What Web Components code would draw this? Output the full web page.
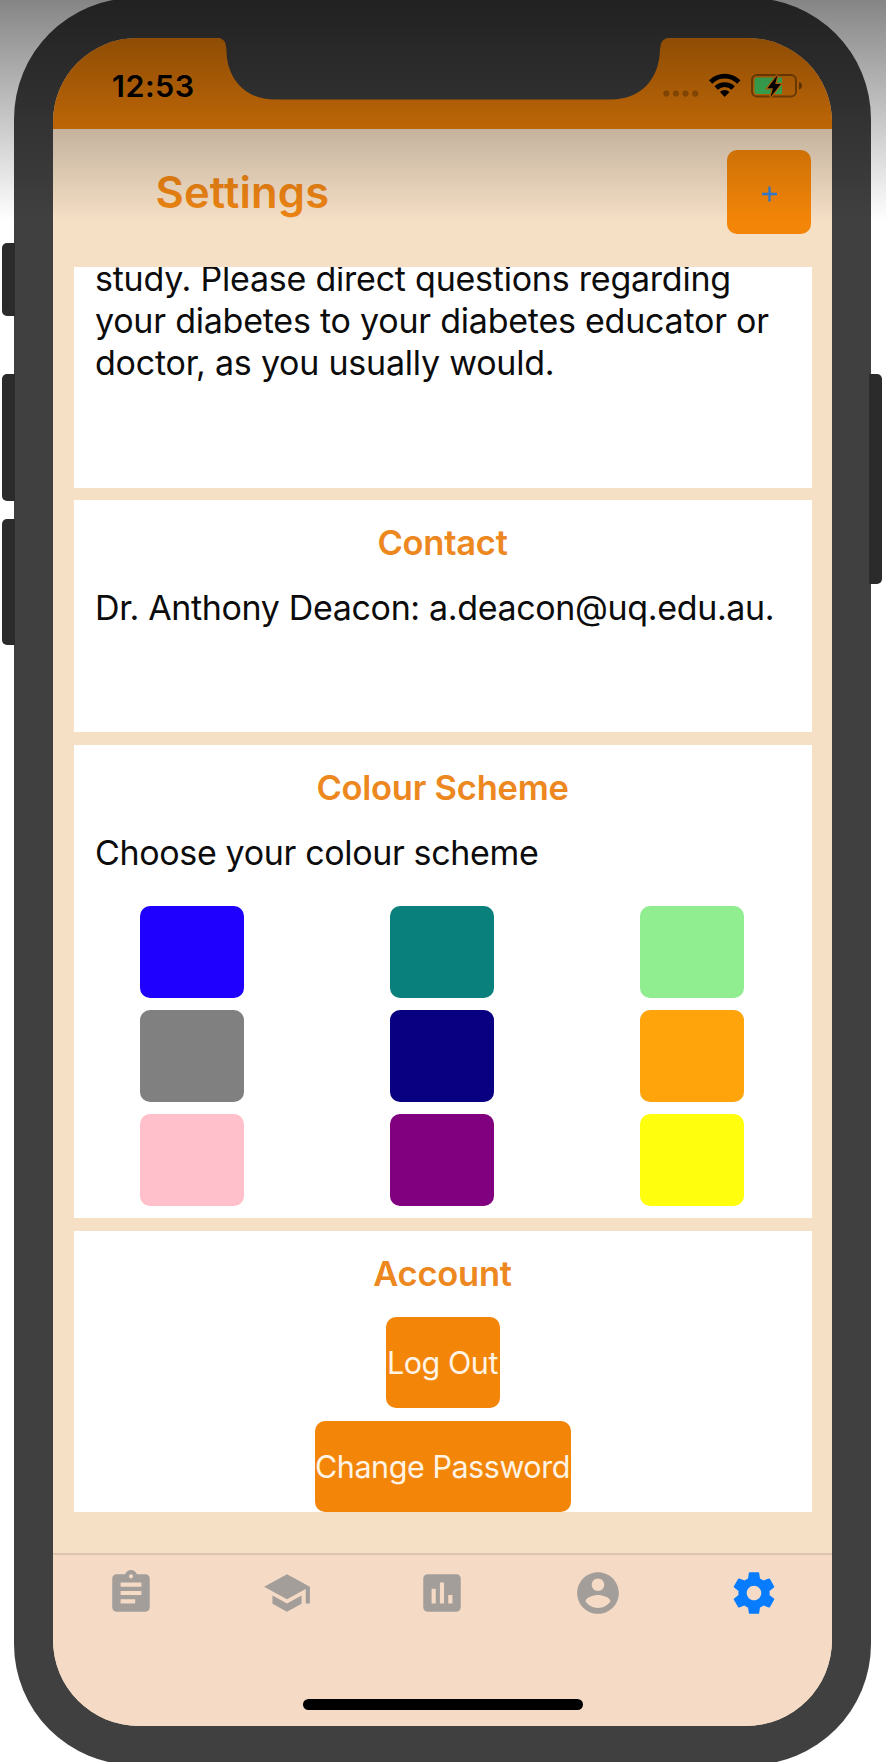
<!DOCTYPE html>
<html lang="en">
<head>
<meta charset="UTF-8">
<title>Settings</title>
<style>
    html, body {
        margin: 0;
        padding: 0;
        height: 1762px;
        overflow: hidden;
        background: #fff;
        font-family: Inter, "Liberation Sans", sans-serif;
    }
</style>
</head>
<body>
<phone-frame>
    <status-bar time="12:53"></status-bar>
    <page-header heading="Settings"></page-header>
    <settings-list>
        <settings-card class="about">
            <body-text style="--spacing: -0.23px">study. Please direct questions regarding<br>your diabetes to your diabetes educator or<br>doctor, as you usually would.</body-text>
        </settings-card>
        <settings-card class="contact" heading="Contact">
            <body-text>Dr. Anthony Deacon: a.deacon@uq.edu.au.</body-text>
        </settings-card>
        <settings-card class="colours" heading="Colour Scheme">
            <body-text>Choose your colour scheme</body-text>
            <colour-grid colours="#1f00ff #0a807d #90ee90 #808080 #080080 #ffa40a #ffc0cb #800080 #ffff0d"></colour-grid>
        </settings-card>
        <settings-card class="account" heading="Account">
            <action-button width="114">Log Out</action-button>
            <action-button width="256">Change Password</action-button>
        </settings-card>
    </settings-list>
    <tab-bar></tab-bar>
</phone-frame>

<script>
class PhoneFrame extends HTMLElement {
    constructor() {
        super();
        this.attachShadow({ mode: 'open' });
        this.shadowRoot.innerHTML = `
            <style>
                :host {
                    display: block;
                    position: relative;
                    width: 886px;
                    height: 1762px;
                    overflow: hidden;
                }

                .body {
                    position: relative;
                    box-sizing: border-box;
                    width: 857.5px;
                    height: 1767px;
                    margin: -2px 0 0 13.5px;
                    padding: 39.5px 39px 39px 39.5px;
                    border-radius: 121px;
                    background: #404040;
                }

                .screen {
                    display: flex;
                    flex-direction: column;
                    height: 1688.5px;
                    border-radius: 84px 84px 86px 86px;
                    overflow: hidden;
                    background: #f5dfc5;
                }

                .key {
                    position: absolute;
                    left: 2px;
                    width: 13px;
                    border-radius: 5px 0 0 5px;
                    background: #2b2b2b;
                }

                .key.power {
                    left: 869px;
                    border-radius: 0 5px 5px 0;
                }

                .notch {
                    position: absolute;
                    left: 0;
                    top: 0;
                }

                .shade {
                    position: absolute;
                    inset: 0 0 auto 0;
                    height: 221px;
                    background: linear-gradient(rgba(0, 0, 0, 0.48), rgba(0, 0, 0, 0));
                    pointer-events: none;
                }
            </style>

            <div class="body"><div class="screen"><slot></slot></div></div>
            <svg class="notch" width="886" height="110">
                <path fill="#404040" d="M214 36V37.5H217Q226 38 226.4 49C226.5 80 246 99.5 275 99.5H611C640 99.5 659.5 80 660 49Q660.5 38 670 37.5V36Z"/>
            </svg>
            <div class="key" style="top: 243px; height: 73px"></div>
            <div class="key" style="top: 374px; height: 127px"></div>
            <div class="key" style="top: 518.5px; height: 126.5px"></div>
            <div class="key power" style="top: 374px; height: 210px"></div>
            <div class="shade"></div>
        `;
    }
}

class StatusBar extends HTMLElement {
    constructor() {
        super();
        this.attachShadow({ mode: 'open' });
        this.shadowRoot.innerHTML = `
            <style>
                :host {
                    display: flex;
                    justify-content: space-between;
                    box-sizing: border-box;
                    height: 91.5px;
                    padding: 29px 28px 0 59px;
                    background: #ec7f08;
                }

                .time {
                    font-size: 30.5px;
                    font-weight: 600;
                    line-height: 38px;
                    letter-spacing: 0.5px;
                }

                svg {
                    display: block;
                    margin-top: 3px;
                }
            </style>

            <span class="time">${this.getAttribute('time')}</span>
            <svg width="144" height="34" viewBox="660 70 144 34">
                <g fill="#000" opacity="0.25">
                    <circle cx="666.3" cy="93.6" r="3.1"/>
                    <circle cx="675.9" cy="93.6" r="3.1"/>
                    <circle cx="685.5" cy="93.6" r="3.1"/>
                    <circle cx="695.2" cy="93.6" r="3.1"/>
                </g>
                <g fill="none" stroke="#000" stroke-width="4.8">
                    <path d="M710.6 82A20 20 0 0 1 738.8 82"/>
                    <path d="M716.2 88A12.2 12.2 0 0 1 733.2 88"/>
                </g>
                <path d="M719.9 91.9A7 7 0 0 1 729.5 91.9L724.7 96.9Z"/>
                <rect x="752" y="75" width="44" height="21.5" rx="5" fill="none" stroke="#000" stroke-opacity="0.38" stroke-width="2"/>
                <path d="M757 77.5H782V94H757Q754.5 94 754.5 91.5V80Q754.5 77.5 757 77.5Z" fill="#49d868"/>
                <path d="M799 82Q802 83 802 85.8Q802 88.6 799 89.6Z" opacity="0.45"/>
                <path d="M777.5 75L767.5 88.2H773L770.5 97L780.8 84H775.2Z" stroke="#ec7f08" stroke-width="2.6" paint-order="stroke"/>
            </svg>
        `;
    }
}

class PageHeader extends HTMLElement {
    constructor() {
        super();
        this.attachShadow({ mode: 'open' });
        this.shadowRoot.innerHTML = `
            <style>
                :host {
                    display: flex;
                    justify-content: space-between;
                    box-sizing: border-box;
                    height: 137.5px;
                    padding: 21px 21.5px 0 102.5px;
                }

                h1 {
                    margin: 0;
                    font-size: 43.5px;
                    font-weight: 600;
                    line-height: 84px;
                    letter-spacing: 0.15px;
                    font-feature-settings: "calt" 0;
                    color: #ed8413;
                }

                button {
                    width: 83.5px;
                    height: 83.5px;
                    padding: 0 0 0 1px;
                    border: 0;
                    border-radius: 10px;
                    background: #f38508;
                    display: grid;
                    place-items: center;
                }
            </style>

            <h1>${this.getAttribute('heading')}</h1>
            <button aria-label="Add">
                <svg width="17" height="20" viewBox="0 0 17 20">
                    <path d="M1 12H16M8.5 4.5V19.5" stroke="#2f7fd6" stroke-width="2.3" fill="none"/>
                </svg>
            </button>
        `;
    }
}

class SettingsList extends HTMLElement {
    constructor() {
        super();
        this.attachShadow({ mode: 'open' });
        this.shadowRoot.innerHTML = `
            <style>
                :host {
                    display: flex;
                    flex-direction: column;
                    gap: 12.5px;
                    box-sizing: border-box;
                    height: 1286px;
                    padding: 0 20.5px;
                }

                ::slotted(*) { flex: none; }
                ::slotted(.about) { height: 221px; --justify: flex-end; --pad: 0 0 104px; }
                ::slotted(.contact) { height: 232px; }
                ::slotted(.colours) { height: 473.5px; }
                ::slotted(.account) { height: 281px; --align: center; --heading-gap: 22px; }
            </style>

            <slot></slot>
        `;
    }
}

class SettingsCard extends HTMLElement {
    constructor() {
        super();
        this.attachShadow({ mode: 'open' });
        const heading = this.getAttribute('heading');
        this.shadowRoot.innerHTML = `
            <style>
                :host {
                    display: flex;
                    flex-direction: column;
                    justify-content: var(--justify, flex-start);
                    align-items: var(--align, stretch);
                    box-sizing: border-box;
                    padding: var(--pad, 22px 0 0);
                    overflow: hidden;
                    background: #fff;
                }

                h2 {
                    margin: 0 0 var(--heading-gap, 23px);
                    font-size: 34.5px;
                    font-weight: 600;
                    line-height: 42px;
                    letter-spacing: -0.25px;
                    text-align: center;
                    color: #ed8720;
                }
            </style>

            ${heading ? `<h2>${heading}</h2>` : ''}
            <slot></slot>
        `;
    }
}

class BodyText extends HTMLElement {
    constructor() {
        super();
        this.attachShadow({ mode: 'open' });
        this.shadowRoot.innerHTML = `
            <style>
                :host {
                    display: block;
                    padding-left: 21.5px;
                    font-size: 34px;
                    line-height: 42px;
                    letter-spacing: var(--spacing, -0.35px);
                    white-space: nowrap;
                    color: #0c0c0c;
                }
            </style>

            <slot></slot>
        `;
    }
}

class ColourGrid extends HTMLElement {
    constructor() {
        super();
        this.attachShadow({ mode: 'open' });
        const colours = this.getAttribute('colours').split(' ');
        this.shadowRoot.innerHTML = `
            <style>
                :host {
                    display: grid;
                    grid-template-columns: repeat(3, 104px);
                    grid-auto-rows: 91.5px;
                    justify-content: space-between;
                    row-gap: 12.5px;
                    padding: 32.5px 67.5px 0 66.5px;
                }

                div { border-radius: 10px; }
            </style>

            ${colours.map(c => `<div style="background: ${c}"></div>`).join('')}
        `;
    }
}

class ActionButton extends HTMLElement {
    constructor() {
        super();
        this.attachShadow({ mode: 'open' });
        this.shadowRoot.innerHTML = `
            <style>
                :host {
                    display: block;
                    margin-bottom: 12.5px;
                }

                button {
                    width: ${this.getAttribute('width')}px;
                    height: 91.5px;
                    padding: 0;
                    border: 0;
                    border-radius: 10px;
                    background: #f38508;
                    font-family: inherit;
                    font-size: 30.5px;
                    letter-spacing: -0.45px;
                    white-space: nowrap;
                    color: #fff3e4;
                    display: flex;
                    align-items: center;
                    justify-content: center;
                }
            </style>

            <button><slot></slot></button>
        `;
    }
}

// 24x24 tab icons
const ICONS = [
    'M19 3h-4.18C14.4 1.84 13.3 1 12 1c-1.3 0-2.4.84-2.82 2H5c-1.1 0-2 .9-2 2v14c0 1.1.9 2 2 2h14c1.1 0 2-.9 2-2V5c0-1.1-.9-2-2-2zm-7 0c.55 0 1 .45 1 1s-.45 1-1 1-1-.45-1-1 .45-1 1-1zm2 14H7v-2h7v2zm3-4H7v-2h10v2zm0-4H7V7h10v2z',
    'M5 13.18v4L12 21l7-3.82v-4L12 17l-7-3.82zM12 3L1 9l11 6 9-4.91V17h2V9L12 3z',
    'M19 3H5c-1.1 0-2 .9-2 2v14c0 1.1.9 2 2 2h14c1.1 0 2-.9 2-2V5c0-1.1-.9-2-2-2zM9 17H7v-7h2v7zm4 0h-2V7h2v10zm4 0h-2v-4h2v4z',
    'M12 2C6.48 2 2 6.48 2 12s4.48 10 10 10 10-4.48 10-10S17.52 2 12 2zm0 3c1.66 0 3 1.34 3 3s-1.34 3-3 3-3-1.34-3-3 1.34-3 3-3zm0 14.2c-2.5 0-4.71-1.28-6-3.22.03-1.99 4-3.08 6-3.08 1.99 0 5.97 1.09 6 3.08-1.29 1.94-3.5 3.22-6 3.22z',
    'M19.43 12.98c.04-.32.07-.64.07-.98s-.03-.66-.07-.98l2.11-1.65c.19-.15.24-.42.12-.64l-2-3.46c-.12-.22-.39-.3-.61-.22l-2.49 1c-.52-.4-1.08-.73-1.69-.98l-.38-2.65C14.46 2.18 14.25 2 14 2h-4c-.25 0-.46.18-.49.42l-.38 2.65c-.61.25-1.17.59-1.69.98l-2.49-1c-.23-.09-.49 0-.61.22l-2 3.46c-.13.22-.07.49.12.64l2.11 1.65c-.04.32-.07.65-.07.98s.03.66.07.98l-2.11 1.65c-.19.15-.24.42-.12.64l2 3.46c.12.22.39.3.61.22l2.49-1c.52.4 1.08.73 1.69.98l.38 2.65c.03.24.24.42.49.42h4c.25 0 .46-.18.49-.42l.38-2.65c.61-.25 1.17-.59 1.69-.98l2.49 1c.23.09.49 0 .61-.22l2-3.46c.12-.22.07-.49-.12-.64l-2.11-1.65zM12 15.5c-1.93 0-3.5-1.57-3.5-3.5s1.57-3.5 3.5-3.5 3.5 1.57 3.5 3.5-1.57 3.5-3.5 3.5z'
];

class TabBar extends HTMLElement {
    constructor() {
        super();
        this.attachShadow({ mode: 'open' });
        this.shadowRoot.innerHTML = `
            <style>
                :host {
                    display: flex;
                    flex-direction: column;
                    align-items: center;
                    flex: 1;
                    border-top: 2px solid #dcc4b0;
                    background: #f5dbc6;
                }

                nav {
                    display: grid;
                    grid-template-columns: repeat(5, 1fr);
                    justify-items: center;
                    width: 100%;
                    padding-top: 13.5px;
                }

                svg {
                    display: block;
                    width: 50px;
                    height: 50px;
                    fill: #a39e9a;
                }

                svg.active { fill: #087cff; }

                .home {
                    width: 280px;
                    height: 11px;
                    margin: auto 0 16px;
                    border-radius: 6px;
                    background: #000;
                }
            </style>

            <nav>
                ${ICONS.map((d, i) => `<svg viewBox="0 0 24 24" class="${i === 4 ? 'active' : ''}"><path d="${d}"/></svg>`).join('')}
            </nav>
            <div class="home"></div>
        `;
    }
}

customElements.define('phone-frame', PhoneFrame);
customElements.define('status-bar', StatusBar);
customElements.define('page-header', PageHeader);
customElements.define('settings-list', SettingsList);
customElements.define('settings-card', SettingsCard);
customElements.define('body-text', BodyText);
customElements.define('colour-grid', ColourGrid);
customElements.define('action-button', ActionButton);
customElements.define('tab-bar', TabBar);
</script>
</body>
</html>
